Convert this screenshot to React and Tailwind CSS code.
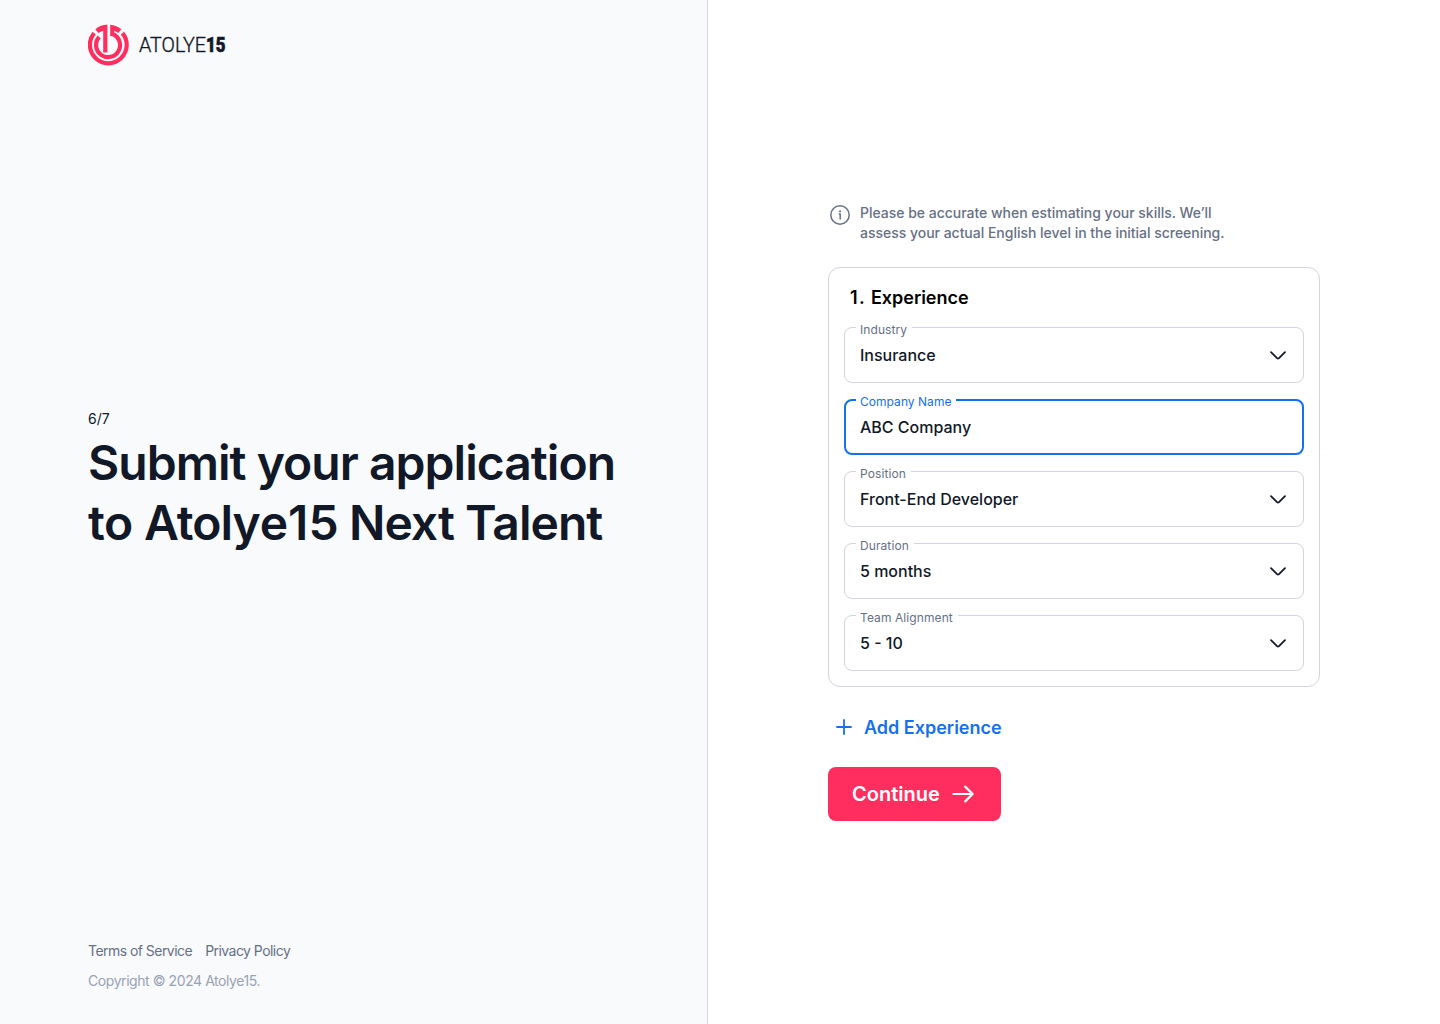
const Logo = () => (
  <svg width="142" height="42" viewBox="0 0 142 42" role="img" aria-label="Atolye15">
    <g fill="none" stroke="#ff2e5f" strokeWidth="4.2">
      <path d="M6.2 9.1A18.4 18.4 0 1 0 34.4 9.1" />
      <path d="M11.2 13A12 12 0 1 0 24.6 10" />
    </g>
    <path fill="#ff2e5f" d="M7.3 5.2C10.6 2.5 15 .8 19.4 .6V28.5H15.2V6.8C13.4 7.3 11.8 8.1 10.4 9ZM22.2 .7C26.4 1.2 30.4 2.8 33.4 5.2L30.3 8.9C29 7.9 27.6 7.2 26.2 6.7V12H22.2Z" />
    <g fill="#111827" stroke="#111827" fontFamily="Roboto, sans-serif" fontSize="20">
      <text x="51" y="28.2" fontWeight="300" strokeWidth="0.35" textLength="67" lengthAdjust="spacingAndGlyphs">ATOLYE</text>
      <text x="118" y="28.2" fontWeight="900" strokeWidth="0.6" textLength="19.5" lengthAdjust="spacingAndGlyphs">15</text>
    </g>
  </svg>
);

const Chevron = () => (
  <svg className="mt-[2px] ml-auto" width="18" height="10" viewBox="0 0 18 10" fill="none" stroke="#111827" strokeWidth="1.75" strokeLinecap="round" strokeLinejoin="round">
    <path d="M2 1.2L8 7.1Q9 8.1 10 7.1L16 1.2" />
  </svg>
);

const Field = ({ label, value, active }) => (
  <fieldset
    className={
      active
        ? "-mt-[11px] h-[67px] min-w-0 rounded-lg border-2 border-[#1570ef] pl-[10px] pr-[15px]"
        : "-mt-[11px] h-[67px] min-w-0 rounded-lg border border-[#d0d5dd] pl-[11px] pr-4"
    }
  >
    <legend
      className={
        active
          ? "pt-[5px] pr-[5px] pb-px pl-1 text-xs leading-[18px] tracking-[0.04px] text-[#1570ef]"
          : "pt-[5px] pr-[5px] pl-1 text-xs leading-[18px] tracking-[0.09px] text-[#667085]"
      }
    >
      {label}
    </legend>
    <div className={active ? "flex h-[29px] items-center pl-1" : "flex h-[31px] items-center pl-1"}>
      <span className="text-base font-medium text-[#111827]">{value}</span>
      {!active && <Chevron />}
    </div>
  </fieldset>
);

const fields = [
  { label: "Industry", value: "Insurance" },
  { label: "Company Name", value: "ABC Company", active: true },
  { label: "Position", value: "Front-End Developer" },
  { label: "Duration", value: "5 months" },
  { label: "Team Alignment", value: "5 - 10" },
];

export default function App() {
  return (
    <div className="flex h-[1024px] w-[1440px] bg-white font-['Inter',sans-serif]">
      <aside className="flex w-[708px] shrink-0 flex-col justify-between border-r border-[#d0d5dd] bg-[#f9fafc] pt-6 pr-20 pb-[33px] pl-[88px]">
        <Logo />
        <div className="mb-[45px]">
          <p className="text-sm leading-5 text-[#111827]">6/7</p>
          <h1 className="mt-1 text-5xl leading-[60px] font-semibold tracking-[-0.96px] whitespace-nowrap text-[#111827]">
            Submit your application
            <br />
            <span className="tracking-[-0.6px]">to </span>Atoly<span className="tracking-[-0.3px]">e</span>
            <span className="tracking-[0.3px]">1</span>5 Next Talent
          </h1>
        </div>
        <footer className="text-sm leading-5">
          <div className="flex gap-[13px] tracking-[-0.54px] text-[#667085]">
            <a>Terms of Service</a>
            <a>Privacy Policy</a>
          </div>
          <p className="mt-[10px] tracking-[-0.43px] text-[#98a2b3]">Copyright © 2024 Atolye15.</p>
        </footer>
      </aside>
      <main className="w-[612px] pt-[203px] pl-[120px]">
        <div className="flex gap-[10px] pl-[2px]">
          <svg className="mt-[2px]" width="20" height="20" viewBox="0 0 20 20" fill="none" stroke="#667085" strokeWidth="1.5">
            <circle cx="10" cy="10" r="9.2" />
            <path d="M8.8 9H10.2V14.5" />
            <circle cx="10" cy="6.2" r="1" fill="#667085" stroke="none" />
          </svg>
          <p className="text-sm leading-5 font-medium tracking-[-0.02px] text-[#667085]">
            Please be accurate when estimating your skills. We’ll
            <br />
            assess your actual English level in the initial screening.
          </p>
        </div>
        <section className="mt-6 h-[420px] w-[492px] rounded-xl border border-[#d0d5dd] px-[15px] pt-4">
          <h2 className="flex gap-[5px] pl-[6px] text-lg leading-7 font-semibold text-black">
            <span className="w-4 tracking-[1.5px]">1.</span>
            <span className="tracking-[-0.03px]">Experience</span>
          </h2>
          <div className="mt-[15px] flex flex-col gap-4">
            {fields.map((f) => (
              <Field key={f.label} {...f} />
            ))}
          </div>
        </section>
        <button className="mt-[26px] flex h-[30px] items-center gap-3 pl-2 text-lg font-semibold text-[#1570ef]">
          <svg className="mb-[2px]" width="16" height="16" viewBox="0 0 16 16" stroke="#1570ef" strokeWidth="1.8" strokeLinecap="round">
            <path d="M8 1V15M1 8H15" />
          </svg>
          Add Experience
        </button>
        <button className="mt-6 flex h-[54px] w-[173px] items-center gap-3 rounded-lg bg-[#ff2e5f] pl-6 text-xl font-semibold text-white">
          Continue
          <svg width="22" height="18" viewBox="0 0 22 18" fill="none" stroke="white" strokeWidth="2.2" strokeLinecap="round" strokeLinejoin="round">
            <path d="M1.4 9H20.5M13.2 1.6L20.6 9L13.2 16.4" />
          </svg>
        </button>
      </main>
    </div>
  );
}
